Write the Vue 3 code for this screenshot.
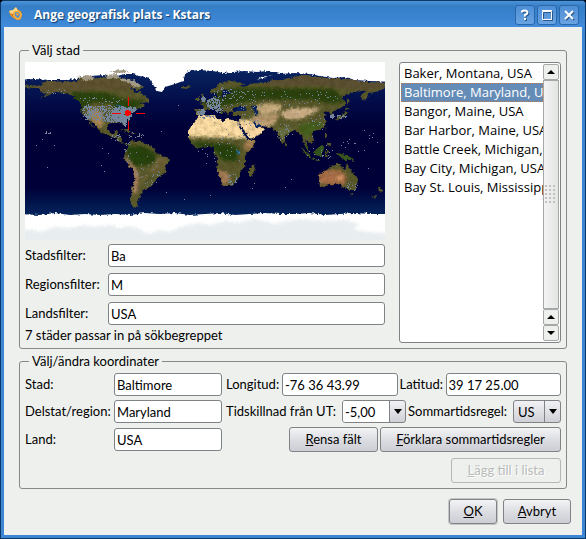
<script setup>
import { ref } from 'vue'

const cities = [
  'Baker, Montana, USA',
  'Baltimore, Maryland, USA',
  'Bangor, Maine, USA',
  'Bar Harbor, Maine, USA',
  'Battle Creek, Michigan, USA',
  'Bay City, Michigan, USA',
  'Bay St. Louis, Mississippi, USA',
]
const selected = ref(1)

const filters = ref([
  { id: 'f-city', label: 'Stadsfilter:', value: 'Ba' },
  { id: 'f-region', label: 'Regionsfilter:', value: 'M' },
  { id: 'f-country', label: 'Landsfilter:', value: 'USA' },
])

/* Outlines are longitude,latitude pairs in degrees; one unit is one map pixel. */
const path = (s) =>
  'M' + s.trim().split(/\s+/).map((p) => {
    const [x, y] = p.split(',')
    return `${x} ${-y}`
  }).join('L') + 'Z'

const land = [
  // North and Central America
  '-183,66 -175,67 -168,66 -162,67 -163,69 -156,71 -141,70 -128,70 -124,74 -115,73 -105,74 -95,75 -85,74 -78,73 -70,70 -65,67 -62,65 -66,62 -74,64 -78,62 -78,58 -77,55 -80,52 -82,55 -88,57 -94,59 -94,62 -88,65 -84,67 -78,66 -73,62 -69,59 -65,60 -61,56 -56,53 -56,50 -65,49 -60,46 -65,44 -70,43 -71,41 -74,40 -76,37 -76,35 -81,31 -80,26 -82,27 -84,30 -90,29 -97,28 -98,22 -95,18 -91,19 -90,21 -87,21 -88,16 -84,15 -83,10 -80,9 -77,8 -79,7 -85,10 -88,13 -95,16 -105,20 -109,26 -114,31 -115,30 -110,23 -115,28 -118,34 -123,38 -124,43 -124,48 -130,54 -138,59 -150,60 -158,56 -165,54 -157,58 -165,61 -165,64 -172,64 -183,65',
  // South America
  '-77,8 -72,12 -64,10 -60,8 -52,5 -50,0 -44,-3 -36,-6 -35,-9 -39,-14 -40,-21 -48,-26 -50,-30 -57,-36 -62,-39 -65,-43 -66,-48 -69,-52 -66,-55 -73,-54 -75,-48 -73,-38 -71,-30 -70,-18 -76,-14 -81,-6 -80,0 -77,4',
  // Europe and Asia
  '-9,43 -2,43 -1,46 -5,48 2,51 8,54 9,57 12,54 20,55 24,59 30,60 24,61 21,63 25,65 18,62 17,57 13,55 11,59 6,58 5,61 12,66 18,70 26,71 33,70 40,68 34,66 41,65 45,68 55,69 62,70 68,72 78,72 85,74 100,77 112,75 128,73 142,73 160,70 183,69 183,66 178,63 170,60 163,59 162,54 157,51 156,57 163,62 150,60 140,57 136,54 140,51 140,46 133,43 128,40 129,36 126,35 125,39 121,41 118,39 122,37 119,35 122,30 119,25 113,22 108,21 107,18 109,12 105,9 100,13 103,4 103,1 100,6 98,11 97,17 93,20 90,22 87,21 80,15 80,10 77,8 73,17 72,21 68,23 65,25 57,26 52,28 48,30 51,25 56,26 59,22 54,17 45,13 42,17 39,22 35,28 34,31 36,36 28,36 27,40 30,41 41,41 38,46 33,45 28,44 29,41 24,40 23,37 20,40 14,45 12,44 18,40 16,38 12,42 9,44 3,43 -2,37 -6,37 -9,38',
  // Africa
  '-6,36 10,37 11,34 19,30 22,33 32,31 34,28 38,19 43,12 51,12 48,5 40,-4 40,-14 35,-20 35,-24 32,-29 26,-34 18,-34 12,-18 13,-8 9,0 9,4 4,6 -8,4 -13,8 -17,15 -17,21 -10,30',
  '-24,66 -16,66 -14,65 -19,63 -24,64',
  '-5,58 -2,58 1,53 1,51 -5,50 -3,54', '-10,54 -6,55 -6,52 -10,52',
  '44,-17 49,-12 50,-16 47,-25 44,-24',
  '80,10 82,7 80,6',
  '141,45 145,43 140,42', '140,41 142,39 140,35 135,33 130,32 132,35 137,37', '142,54 144,50 142,46',
  '95,6 104,-2 106,-6 102,-4', '106,-6 115,-8 114,-9 106,-7',
  '109,1 117,7 119,5 116,-4 110,-3', '120,1 125,1 121,-1 123,-5 120,-5',
  '120,18 122,18 122,14 120,14', '122,9 126,9 126,6 122,7', '121,25 122,25 120,22',
  '131,-1 141,-3 148,-7 150,-10 146,-8 138,-8 135,-4',
  '114,-22 122,-18 126,-14 130,-12 136,-12 136,-15 140,-18 142,-11 146,-19 153,-26 152,-33 150,-38 144,-38 138,-35 131,-31 124,-33 118,-35 115,-34',
  '145,-41 148,-41 147,-43',
  '173,-35 178,-38 175,-41 174,-39', '173,-41 171,-45 167,-46 171,-43',
  '-85,22 -78,23 -74,20 -78,20', '-74,20 -68,19 -72,18', '-78,18 -76,18 -77,17.5',
].map(path).join('')

const ice = [
  '-190,95 -190,72 -170,73 -155,72 -140,72 -128,73 -124,76 -115,76 -100,77 -88,76 -80,78 -72,78 -66,76 -58,75 -54,71 -51,66 -48,61 -43,60 -40,65 -30,68 -22,71 -20,77 -17,81 -5,82 8,81 18,79 28,80 40,81 52,80 62,81 75,78 90,79 105,78 115,76 128,74 140,75 150,72 165,71 190,70 190,95',
  '-190,-62 -165,-63 -150,-61 -135,-63 -120,-62 -105,-63 -90,-62 -75,-63 -60,-61 -45,-62 -30,-61 -15,-63 0,-62 15,-61 30,-63 45,-62 60,-61 75,-62 90,-62 105,-61 120,-63 135,-62 150,-61 165,-62 190,-62 190,-95 -190,-95',
  '52,72 56,75 68,77 60,75',
].map(path).join('')

const archipelago = [
  '-128,75 -116,77 -110,74 -118,71', '-100,77 -88,78 -85,74 -98,73', '-84,74 -72,72 -63,66 -70,64 -75,69 -84,71', '-96,81 -80,82 -76,80 -88,79',
].map(path).join('')

const shelf = path('-190,-78 -172,-78 -165,-80 -150,-75 -136,-76 -120,-73 -110,-75 -95,-73 -84,-76 -76,-74 -64,-78 -58,-82 -45,-78 -36,-80 -24,-75 -8,-71 6,-73 20,-69 34,-71 48,-67 60,-69 70,-72 82,-69 100,-67 120,-69 140,-68 155,-72 148,-78 165,-80 190,-82 190,-95 -190,-95')

const patches = [
  ['#5e5230', '-170,73 -70,73 -70,61 -95,62 -120,60 -170,60'],
  ['#5b5133', '60,80 183,80 183,62 150,62 110,66 60,66'],
  ['#25420a', '-78,6 -62,6 -50,-1 -48,-8 -58,-14 -72,-13 -78,-3'],
  ['#27430c', '-14,10 10,9 25,8 34,4 32,-9 18,-9 9,2 -8,5'],
  ['#2c440f', '-135,60 -100,60 -78,52 -60,52 -70,42 -82,33 -90,35 -92,48 -112,50 -120,44 -124,40'],
  ['#2a430e', '-5,50 10,60 30,64 60,64 130,63 140,50 125,48 110,52 60,53 30,48 5,44'],
  ['#44611f', '93,26 110,31 120,28 108,19 102,14 95,19'],
  ['#686e3c', '72,24 84,25 90,24 82,18 76,12'],
  ['#33581a', '95,6 120,8 120,-9 105,-8'],
  ['#33581a', '130,0 150,-5 150,-11 135,-8'],
  ['#ffe0a6', '-20,33 -10,38 10,37 20,34 34,34 40,20 44,14 20,14 0,15 -20,15'],
  ['#ffdda6', '34,32 47,32 57,27 62,20 45,10 37,20'],
  ['#c2a277', '46,32 50,37 75,38 70,28 60,24'],
  ['#c9ad7f', '50,46 62,49 78,47 72,39 56,37'],
  ['#d2b48c', '75,39 88,44 105,44 116,44 105,37 95,33 80,33'],
  ['#ab7048', '113,-20 122,-18 135,-18 142,-24 140,-32 128,-33 113,-32'],
  ['#d69a66', '132,-23 138,-24 137,-28 131,-28'],
  ['#ae8a56', '-118,42 -108,44 -103,38 -101,28 -106,24 -112,30'],
  ['#a67e58', '12,-17 22,-20 26,-27 20,-34 15,-30'],
  ['#ab8565', '-81,-4 -77,-7 -68,-18 -66,-26 -68,-42 -73,-42 -71,-24'],
  ['#a98253', '40,11 52,12 48,5 42,0 39,5'],
  ['#6f6337', '-48,-6 -38,-6 -40,-16 -48,-20 -62,-22 -64,-34 -56,-20'],
].map(([fill, s]) => ({ fill, d: path(s) }))

/* Small deterministic generator, so the city dots stay the same on every load. */
let seed = 77
const rnd = () => {
  seed = (seed * 16807) % 2147483647
  return seed / 2147483647
}
const clusters = [
  [-98, 39, 22, 8, 360], [-84, 38, 10, 8, 560], [-117, 40, 6, 8, 100], [-90, 34, 9, 4, 120],
  [-81, 30, 2, 4, 40], [-74, 43, 5, 3, 90], [-105, 52, 25, 3, 30], [8, 49, 7, 6, 170],
  [-2, 53, 2, 3, 50], [-4, 40, 4, 3, 80], [13, 43, 4, 4, 35], [20, 59, 12, 6, 40],
  [35, 52, 25, 10, 60], [90, 55, 45, 8, 45], [127, 36, 2, 2, 40], [136, 36, 5, 2, 20],
  [78, 20, 7, 10, 22], [112, 30, 9, 9, 18], [28, -27, 6, 6, 24], [15, 5, 24, 14, 30],
  [2, 35, 8, 2, 18], [45, 33, 12, 7, 16], [-58, -20, 12, 16, 30], [-78, 0, 3, 12, 14],
  [-70, 17, 9, 3, 18], [-90, 15, 6, 4, 18], [147, -34, 6, 4, 16], [115, -1, 14, 9, 18],
  [-157, 20, 3, 2, 10], [-150, 61, 12, 3, 10], [155, 10, 20, 12, 14], [0, 0, 175, 50, 36],
]
const dots = clusters.map(([lon, lat, rx, ry, n]) => {
  let d = ''
  for (let i = 0; i < n; i++) {
    const a = rnd() * Math.PI * 2
    const r = Math.sqrt(rnd())
    d += `M${Math.round(lon + Math.cos(a) * r * rx)} ${-Math.round(lat + Math.sin(a) * r * ry)}h1v1h-1z`
  }
  return d
}).join('')
</script>

<template>
  <div class="window">
    <header class="titlebar">
      <svg class="appicon" viewBox="0 0 16 16" aria-hidden="true">
        <path d="M1 5 5 4 8 1 10 4 13 5 14 10 12 14 9 14 5 12 2 9Z" fill="#dc8a28" />
        <path d="M1 5 5 4 8 1 10 5 6 6 5 9 3 8Z" fill="#ffd98a" />
        <path d="M6 6 10 5 13 8 12 12 9 13 6 10Z" fill="#5a8fc6" stroke="#ffb43a" stroke-width="1.500" />
        <path d="M8 7 10 7 11 9 9 10Z" fill="#f4a12c" />
        <path d="M3 7 5 8 5 10Z" fill="#a65d18" />
      </svg>
      <h1>Ange geografisk plats - Kstars</h1>
      <div class="winbuttons">
        <button type="button" aria-label="Hjälp">
          <svg viewBox="0 0 18 18"><path d="M6 6.500V5.500Q7 4.500 9 4.500T11.500 6.500Q11.500 8 9 9V10.500M9 12V14" /></svg>
        </button>
        <button type="button" aria-label="Maximera">
          <svg class="thin" viewBox="0 0 18 18"><path d="M5 5.500H13.500V13.500H4.500V5.500M4 4.500H14" /></svg>
        </button>
        <button type="button" aria-label="Stäng">
          <svg viewBox="0 0 18 18"><path d="M5 5 13 13M13 5 5 13" /></svg>
        </button>
      </div>
    </header>

    <main class="body">
      <fieldset class="group choose">
        <legend>Välj stad</legend>
        <div class="left">
          <svg class="map" viewBox="-180 -90 360 178" preserveAspectRatio="none" role="img" aria-label="Världskarta">
            <defs>
              <clipPath id="landclip"><path :d="land" /></clipPath>
              <filter id="rough" x="0" y="0" width="100%" height="100%" color-interpolation-filters="sRGB">
                <feTurbulence type="fractalNoise" baseFrequency="0.35" numOctaves="2" seed="4" result="n" />
                <feDisplacementMap in="SourceGraphic" in2="n" scale="4" xChannelSelector="R" yChannelSelector="G" />
              </filter>
              <filter id="soft"><feGaussianBlur stdDeviation="1.500" /></filter>
              <filter id="grain" x="0" y="0" width="100%" height="100%" color-interpolation-filters="sRGB">
                <feTurbulence type="fractalNoise" baseFrequency="0.2" numOctaves="3" seed="9" />
                <feColorMatrix values="0 0 0 0 0.2  0 0 0 0 0.14  0 0 0 0 0  2 0 0 0 -0.8" />
              </filter>
              <linearGradient id="sea" x1="0" y1="0" x2="0" y2="1">
                <stop offset="0" stop-color="#0a2a66" />
                <stop offset="0.22" stop-color="#020c48" />
                <stop offset="0.36" stop-color="#000036" />
                <stop offset="0.7" stop-color="#000038" />
                <stop offset="0.85" stop-color="#03245c" />
              </linearGradient>
            </defs>
            <rect x="-180" y="-90" width="360" height="180" fill="url(#sea)" />
            <g filter="url(#rough)">
              <path :d="land" fill="#5a5a2c" />
              <g clip-path="url(#landclip)">
                <path v-for="(p, i) in patches" :key="i" :d="p.d" :fill="p.fill" filter="url(#soft)" />
                <rect x="-180" y="-80" width="360" height="140" filter="url(#grain)" opacity="0.250" />
              </g>
              <path d="M28-41 33-45 41-43 40-41ZM47-46 52-47 53-38 50-37ZM32-30 44-12 42-12 34-26ZM48-30 51-24 56-26 55-27Z" fill="#04205f" />
              <path d="M31-1 34-2 35 2 32 3ZM-92-48-84-47-85-42-87-46ZM-83-45-79-43-83-42Z" fill="#1d6284" />
            </g>
            <g filter="url(#rough)">
              <path :d="ice" fill="#fff" />
              <path :d="archipelago" fill="#a29984" />
              <path :d="shelf" fill="#e8edf0" filter="url(#soft)" />
            </g>
            <path :d="dots" fill="#74869c" shape-rendering="crispEdges" />
            <path d="M-76.500-55V-46M-76.500-31V-22M-93-38.500H-84M-69-38.500H-60" stroke="#f00" />
            <path d="M-79-42H-76V-41H-74V-37H-76V-36H-79V-37H-80V-41H-79Z" fill="#f00" />
          </svg>
          <div class="filters">
            <template v-for="f in filters" :key="f.id">
              <label :for="f.id">{{ f.label }}</label>
              <input :id="f.id" v-model="f.value" type="text" />
            </template>
          </div>
          <p class="status">7 städer passar in på sökbegreppet</p>
        </div>

        <div class="listbox">
          <ul role="listbox" aria-label="Städer">
            <li
              v-for="(c, i) in cities"
              :key="c"
              role="option"
              :aria-selected="i === selected"
              :class="{ on: i === selected }"
              @click="selected = i"
            >{{ c }}</li>
          </ul>
          <div class="scroll">
            <button type="button" aria-label="Uppåt"><svg viewBox="0 0 8 4"><path d="M0 4 4 0 8 4Z" /></svg></button>
            <div class="thumb"><span class="grip"></span></div>
            <button type="button" aria-label="Uppåt"><svg viewBox="0 0 8 4"><path d="M0 4 4 0 8 4Z" /></svg></button>
            <button type="button" aria-label="Nedåt"><svg viewBox="0 0 8 4"><path d="M0 0 4 4 8 0Z" /></svg></button>
          </div>
        </div>
      </fieldset>

      <fieldset class="group coords">
        <legend>Välj/ändra koordinater</legend>
        <label for="city">Stad:</label>
        <input id="city" type="text" value="Baltimore" />
        <div class="line">
          <label for="lon" class="l-lon">Longitud:</label>
          <input id="lon" type="text" value="-76 36 43.99" />
          <label for="lat" class="l-lat">Latitud:</label>
          <input id="lat" type="text" value="39 17 25.00" />
        </div>

        <label for="region">Delstat/region:</label>
        <input id="region" type="text" value="Maryland" />
        <div class="line">
          <label for="tz" class="l-tz">Tidskillnad från UT:</label>
          <span class="combo editable">
            <select id="tz"><option>-5,00</option></select>
            <span class="drop"><svg viewBox="0 0 8 5"><path d="M0 0H8L4 5Z" /></svg></span>
          </span>
          <label for="dst" class="l-dst">Sommartidsregel:</label>
          <span class="combo rule">
            <select id="dst"><option>US</option></select>
            <span class="drop"><svg viewBox="0 0 8 5"><path d="M0 0H8L4 5Z" /></svg></span>
          </span>
        </div>

        <label for="country">Land:</label>
        <input id="country" type="text" value="USA" />
        <div class="line actions">
          <button type="button" class="btn clear"><u>R</u>ensa fält</button>
          <button type="button" class="btn explain"><u>F</u>örklara sommartidsregler</button>
        </div>
        <button type="button" class="btn add" disabled><u>L</u>ägg till i lista</button>
      </fieldset>

      <footer class="dialogbuttons">
        <button type="button" class="btn ok"><u>O</u>K</button>
        <button type="button" class="btn cancel"><u>A</u>vbryt</button>
      </footer>
    </main>
  </div>
</template>

<style>
body {
  margin: 0;
  background: #000;
}
</style>

<style scoped>
* {
  box-sizing: border-box;
}
.window {
  display: flex;
  flex-direction: column;
  min-height: 100vh;
  border: 1px solid #0d3766;
  border-radius: 4px 4px 0 0;
  background: #3c86d4;
  color: #000;
  font: 13px/18px Lato, "Open Sans", sans-serif;
}
.titlebar {
  display: flex;
  align-items: center;
  height: 26px;
  padding: 0 6px 0 7px;
  border-radius: 3px 3px 0 0;
  background: linear-gradient(#4d93d8, #357ec6 20%, #3a83d0 60%, #418cdc);
}
.appicon {
  width: 16px;
  height: 16px;
}
h1 {
  flex: 1;
  margin: 0 0 0 10px;
  padding-top: 2px;
  color: #fff;
  font: bold 12px/18px "Open Sans", sans-serif;
  text-shadow: 1px 1px 1px #123c6c;
}
.winbuttons {
  display: flex;
  gap: 2px;
  padding-top: 2px;
}
.winbuttons button {
  width: 20px;
  height: 20px;
  padding: 0;
  border: 1px solid #2a68aa;
  border-radius: 3px;
  background: linear-gradient(#4d8ed6, #69a3e2);
}
.winbuttons svg {
  display: block;
  width: 18px;
  height: 18px;
  fill: none;
  stroke: #fff;
  stroke-width: 2;
  filter: drop-shadow(1px 1px 0 #28568c);
}
.winbuttons .thin {
  stroke-width: 1;
}
.body {
  flex: 1;
  margin: 0 3px 3px;
  padding: 14px 15px 10px 15px;
  background: #eef0ee;
}
.group {
  min-width: 0;
  margin: 0;
  border: 1px solid #858987;
  border-radius: 3px;
}
legend {
  height: 18px;
  margin-left: 4px;
  padding: 0 3px;
}
label {
  padding-bottom: 2px;
}
input,
select {
  width: 100%;
  min-width: 0;
  height: 23px;
  padding: 1px 2px 0;
  border: 1px solid #7f8386;
  border-radius: 3px;
  background: #fff;
  color: #000;
  font: inherit;
}
.choose {
  display: grid;
  grid-template-columns: minmax(0, 360fr) minmax(0, 162fr);
  column-gap: 14px;
  padding: 3px 5px 4px;
}
.map {
  display: block;
  width: 100%;
  height: 178px;
}
.filters {
  display: grid;
  grid-template-columns: 83px 1fr;
  row-gap: 6px;
  align-items: center;
  margin-top: 4px;
}
.status {
  margin: 1px 0 0;
}
.listbox {
  display: flex;
  height: 281px;
  padding: 1px;
  border: 1px solid #7f8386;
  border-radius: 3px;
  background: #fff;
}
.listbox ul {
  flex: 1;
  min-width: 0;
  margin: 0;
  padding: 0;
  overflow: hidden;
  font-family: "Open Sans", sans-serif;
  list-style: none;
}
.listbox li {
  height: 19px;
  padding: 0 2px;
  border: 1px solid transparent;
  line-height: 17px;
  white-space: nowrap;
}
.listbox li.on {
  border: 1px dotted #b97a4e;
  background: #648cb7;
  color: #fff;
}
.scroll {
  display: flex;
  flex-direction: column;
  width: 16px;
}
.scroll button {
  display: grid;
  place-items: center;
  width: 16px;
  height: 16px;
  padding: 0;
  border: 1px solid #a5a8a7;
  border-radius: 2px;
  background: #eef0ee;
}
.scroll svg {
  width: 8px;
  height: 4px;
}
.thumb {
  display: grid;
  flex: 1;
  place-items: center;
  border: 1px solid #a5a8a7;
  background: linear-gradient(90deg, #f3f4f3, #e3e5e3);
}
.grip {
  width: 12px;
  height: 20px;
  background: radial-gradient(circle at 1px 1px, #bfc2c0 1px, transparent 1px) 0 0 / 4px 4px;
}
.coords {
  display: grid;
  grid-template-columns: 89px minmax(0, 108fr) minmax(0, 339fr);
  row-gap: 4px;
  align-items: center;
  margin-top: 3px;
  padding: 3px 5px 5px;
}
.line {
  display: flex;
  align-items: center;
  padding-left: 4px;
  white-space: nowrap;
}
.line input {
  flex: 1;
}
.l-lon {
  width: 56px;
}
.l-lat {
  width: 48px;
  padding-left: 2px;
}
.l-tz {
  width: 116px;
}
.l-dst {
  width: 107px;
  padding-left: 2px;
}
.combo {
  display: flex;
  flex: 1;
  min-width: 0;
  overflow: hidden;
  border: 1px solid #7f8386;
  border-radius: 3px;
  background: linear-gradient(#f2f2f5, #cfd0d6);
}
.combo.rule {
  flex: 0 0 48px;
}
.combo select {
  flex: 1;
  height: 21px;
  border: 0;
  border-radius: 0;
  background: none;
  appearance: none;
}
.combo.rule select {
  padding-left: 4px;
}
.combo.editable select {
  background: #fff;
}
.drop {
  display: grid;
  flex: 0 0 16px;
  place-items: center;
  border-left: 1px solid #7f8386;
}
.drop svg {
  width: 8px;
  height: 5px;
}
.btn {
  height: 25px;
  padding: 0 0 1px;
  border: 1px solid #7f8386;
  border-radius: 3px;
  background: linear-gradient(#f4f4f6, #dddee3 50%, #cdced5);
  color: #000;
  font: inherit;
}
.actions {
  justify-content: flex-end;
  gap: 2px;
}
.clear {
  width: 89px;
}
.explain {
  width: 181px;
}
.add {
  grid-column: 1 / -1;
  justify-self: end;
  width: 110px;
  margin-top: 2px;
}
.add:disabled {
  border-color: #b4b7b5;
  background: #eef0ee;
  color: #b9bbb9;
  text-shadow: 1px 1px 0 #fff;
}
.dialogbuttons {
  display: flex;
  justify-content: flex-end;
  gap: 6px;
  margin: 10px -4px 0 0;
}
.ok {
  width: 48px;
  box-shadow: 0 0 0 1px #c4c6c5;
}
.cancel {
  width: 68px;
}
</style>
